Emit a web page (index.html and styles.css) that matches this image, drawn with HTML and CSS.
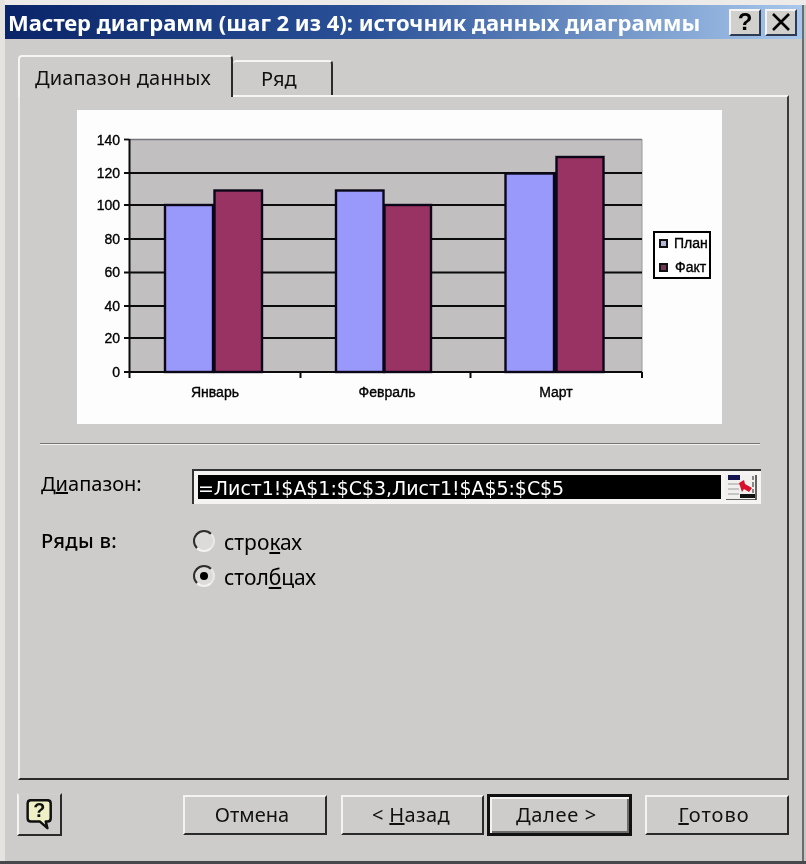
FILE: index.html
```html
<!DOCTYPE html>
<html lang="ru">
<head>
<meta charset="utf-8">
<title>Мастер диаграмм</title>
<link rel="stylesheet" href="styles.css">
</head>
<body>
<div class="window">
  <header class="titlebar">
    <span class="title">Мастер диаграмм (шаг 2 из 4): источник данных диаграммы</span>
    <div class="controls">
      <button class="ctl ctl-help">?</button>
      <button class="ctl ctl-close">
        <svg width="20" height="18" viewBox="0 0 20 18"><path d="M2 1 L18 17 M18 1 L2 17" stroke="#000" stroke-width="2.6" fill="none"/></svg>
      </button>
    </div>
  </header>

  <div class="tabs">
    <div class="tab tab-active">Диапазон данных</div>
    <div class="tab tab-second">Ряд</div>
  </div>

  <main class="panel">
    <div class="chart">
      <svg width="645" height="314" viewBox="77 110 645 314" class="chart-svg">
        <defs><clipPath id="legclip"><rect x="653" y="231" width="56" height="48"/></clipPath></defs>
        <rect x="77" y="110" width="645" height="314" fill="#fdfdfd"/>
        <rect x="129" y="139" width="513" height="233" fill="#c1bfc0"/>
        <path d="M129 139.5H642" stroke="#77767a" stroke-width="1.5"/>
        <path d="M642 139V372" stroke="#99989a" stroke-width="1"/>
        <g stroke="#0b0b0b" stroke-width="1.8" fill="none">
          <path d="M124 173H642M124 205H642M124 239H642M124 272.5H642M124 306H642M124 338H642"/>
          <path d="M124 139.5H129"/>
          <path d="M129.5 139V378M124 372H642M300.5 372V378M470.5 372V378M642 372V378" stroke-width="2"/>
        </g>
        <g stroke="#0b0718" stroke-width="2.4">
          <rect x="165" y="205" width="48" height="167" fill="#9999fb"/>
          <rect x="214.5" y="190.5" width="47.5" height="181.5" fill="#993364"/>
          <rect x="336" y="190.5" width="47.5" height="181.5" fill="#9999fb"/>
          <rect x="384.5" y="205" width="46.5" height="167" fill="#993364"/>
          <rect x="505.5" y="173.5" width="48.5" height="198.5" fill="#9999fb"/>
          <rect x="556.5" y="157" width="47" height="215" fill="#993364"/>
        </g>
        <path d="M554.5 173V372" stroke="#0b0718" stroke-width="3"/>
        <g class="axis-y" text-anchor="end">
          <text x="120" y="145">140</text>
          <text x="120" y="178">120</text>
          <text x="120" y="210">100</text>
          <text x="120" y="244">80</text>
          <text x="120" y="277">60</text>
          <text x="120" y="311">40</text>
          <text x="120" y="343">20</text>
          <text x="120" y="377">0</text>
        </g>
        <g class="axis-x" text-anchor="middle">
          <text x="215" y="397">Январь</text>
          <text x="387" y="397">Февраль</text>
          <text x="556" y="397">Март</text>
        </g>
        <rect x="654" y="232" width="56" height="46" fill="#fff" stroke="#000" stroke-width="2"/>
        <rect x="660" y="240" width="7" height="7" fill="#b5b5d8" stroke="#111" stroke-width="2"/>
        <rect x="660" y="264" width="7" height="7" fill="#6e3a55" stroke="#111" stroke-width="2"/>
        <g clip-path="url(#legclip)" class="legend-text">
          <text x="674" y="248">План</text>
          <text x="675" y="272">Факт</text>
        </g>
      </svg>
    </div>

    <hr class="sep">

    <div class="field-row">
      <label class="label">Д<u>и</u>апазон:</label>
      <div class="range">
        <div class="range-text">=Лист1!$A$1:$C$3,Лист1!$A$5:$C$5</div>
        <button class="range-btn">
          <svg width="32" height="25" viewBox="0 0 32 25">
            <rect x="0" y="0" width="32" height="25" fill="#f1f0ee"/>
            <rect x="3" y="0" width="12" height="5" fill="#15154f"/>
            <path d="M3 9H16M3 14H14M3 19H14" stroke="#9a9a9a" stroke-width="1.2"/>
            <rect x="15" y="19" width="15" height="4" fill="#111"/>
            <path d="M28 1V5M28 7V12M28 14V18" stroke="#666" stroke-width="1.5"/>
            <path d="M31 0V25H1" stroke="#333" stroke-width="1.5" fill="none"/>
            <path d="M14 8 L19 5 L20 9 L27 13 L24 17 L19 14 L17 17 Z" fill="#d8102c"/>
          </svg>
        </button>
      </div>
    </div>

    <div class="radio-block">
      <div class="label">Ряды в:</div>
      <div class="radios">
        <div class="radio-row"><span class="radio"></span><span class="radio-label">стро<u>к</u>ах</span></div>
        <div class="radio-row"><span class="radio radio-on"></span><span class="radio-label">стол<u>б</u>цах</span></div>
      </div>
    </div>
  </main>

  <footer class="footer">
    <button class="btn btn-help">
      <svg width="28" height="32" viewBox="0 0 34 38">
        <path d="M6 1H26Q30 1 30 5V23Q30 27 26 27H24L26 35L17 27H6Q2 27 2 23V5Q2 1 6 1Z" fill="#eff0c6" stroke="#101010" stroke-width="3" stroke-linejoin="round"/>
        <text x="16" y="22" class="help-mark" text-anchor="middle">?</text>
      </svg>
    </button>
    <button class="btn btn-cancel">Отмена</button>
    <button class="btn btn-back">&lt; <u>Н</u>азад</button>
    <button class="btn btn-next">Далее &gt;</button>
    <button class="btn btn-done"><u>Г</u>отово</button>
  </footer>
</div>
</body>
</html>
```
FILE: styles.css
```css
* { box-sizing: border-box; }
html, body { margin: 0; padding: 0; }
body { background: #e9e8e6; width: 806px; height: 864px; overflow: hidden; }

.window {
  width: 806px;
  height: 864px;
  background: #cecccA;
  display: flex;
  flex-direction: column;
  padding-top: 5px;
  position: relative;
  box-shadow: inset 5px 0 0 #e4e3df, inset 0 5px 0 #ecebe9, inset -1px 0 0 #c6c5c3, inset -3px 0 0 #c6c5c3;
  font-family: "DejaVu Sans", sans-serif;
  color: #111;
  filter: blur(0.6px);
}
.window::after {
  content: "";
  position: absolute;
  left: 0; right: 0; bottom: 0;
  height: 3px;
  background: #47484c;
}
.window::before {
  content: "";
  position: absolute;
  top: 5px; bottom: 0; right: 2px;
  width: 2px;
  background: #6b6c70;
}

.titlebar {
  height: 34px;
  margin-left: 5px;
  margin-right: 3px;
  background: linear-gradient(90deg, #0a2468 0%, #2a5198 45%, #a8c8ec 100%);
  display: flex;
  align-items: center;
  justify-content: space-between;
  padding-left: 3px;
}
.title {
  color: #fff;
  font-family: "Noto Sans", sans-serif;
  font-weight: 700;
  font-size: 22px;
  white-space: nowrap;
}
.controls { display: flex; gap: 4px; margin-right: 6px; }
.ctl {
  width: 32px;
  height: 27px;
  padding: 0;
  background: #d2d0cd;
  border: 2px solid;
  border-color: #f4f4f2 #2e3a52 #2e3a52 #f4f4f2;
  display: flex;
  align-items: center;
  justify-content: center;
  font-family: "Liberation Sans", sans-serif;
  font-weight: 700;
  font-size: 24px;
  color: #000;
}

.tabs {
  display: flex;
  align-items: flex-end;
  margin: 16px 0 0 18px;
  height: 40px;
  position: relative;
  z-index: 1;
}
.tab {
  display: flex;
  align-items: center;
  font-size: 20px;
  font-family: "Noto Sans", sans-serif;
  border-top: 2px solid #f6f5f3;
  border-left: 2px solid #f6f5f3;
  border-right: 2px solid #2a2a2a;
  border-radius: 4px 4px 0 0;
}
.tab-active {
  width: 215px;
  height: 42px;
  margin-bottom: -2px;
  padding-left: 15px;
  letter-spacing: 0.15px;
  background: #cecccA;
}
.tab-second {
  width: 100px;
  height: 35px;
  padding-left: 28px;
  border-left: 0;
}

.panel {
  margin-left: 18px;
  width: 771px;
  height: 685px;
  border: 2px solid;
  border-color: #f6f5f3 #3a3a3a #2a2a2a #f0efed;
  display: flex;
  flex-direction: column;
  flex: none;
}
.chart { margin: 13px 0 0 57px; width: 645px; height: 314px; }
.chart-svg { display: block; }
.axis-y text, .axis-x text, .legend-text text {
  font: 14px "Liberation Sans", sans-serif;
  fill: #000;
  stroke: #000;
  stroke-width: 0.35px;
}

.sep {
  margin: 19px 0 0 20px;
  width: 720px;
  height: 2px;
  border: 0;
  border-top: 1px solid #77777a;
  border-bottom: 1px solid #f2f1ef;
}

.label {
  font-family: "Noto Sans", sans-serif;
  font-size: 20px;
  display: block;
  width: 151px;
  margin-left: 21px;
  flex: none;
  color: #000;
}
.field-row {
  display: flex;
  align-items: center;
  margin-top: 24px;
  height: 35px;
}
.field-row .label { padding-bottom: 6px; }
.range {
  width: 569px;
  height: 35px;
  display: flex;
  align-items: stretch;
  background: #f5f4f2;
  border-top: 2px solid #333;
  border-left: 2px solid #333;
  padding: 4px 3px 5px 4px;
  gap: 4px;
  flex: none;
}
.range-text {
  width: 523px;
  background: #000;
  color: #fff;
  font-family: "DejaVu Sans", sans-serif;
  font-size: 19px;
  letter-spacing: -0.06px;
  line-height: 27px;
  white-space: nowrap;
  overflow: hidden;
}
.range-btn { border: 0; padding: 0; background: none; width: 32px; flex: none; display: block; }
.range-btn svg { display: block; }

.radio-block { display: flex; margin-top: 26px; }
.radio-block .label { width: 152px; margin-top: -3px; font-weight: 500; letter-spacing: 0.3px; }
.radios { display: flex; flex-direction: column; gap: 13px; }
.radio-row { display: flex; align-items: center; height: 22px; }
.radio {
  width: 22px;
  height: 22px;
  border-radius: 50%;
  background: #dcdbd9;
  border: 2px solid;
  border-color: #2d2d2d #e9e8e6 #f3f2f0 #2d2d2d;
  display: flex;
  align-items: center;
  justify-content: center;
  flex: none;
}
.radio-on::after {
  content: "";
  width: 8px;
  height: 8px;
  border-radius: 50%;
  background: #000;
}
.radio-label {
  font-family: "Noto Sans", sans-serif;
  font-size: 21px;
  margin-left: 9px;
  position: relative;
  top: 1px;
  color: #000;
}

.footer {
  display: flex;
  align-items: center;
  margin-top: 13px;
  padding-left: 17px;
  height: 43px;
}
.btn {
  height: 40px;
  width: 144px;
  padding: 0;
  background: #cecccA;
  border: 2px solid;
  border-color: #f4f3f1 #2a2a2a #2a2a2a #f4f3f1;
  font-family: "Noto Sans", sans-serif;
  font-size: 20px;
  color: #111;
  flex: none;
}
.btn-help {
  width: 45px;
  height: 43px;
  display: flex;
  align-items: center;
  justify-content: center;
  border-top-color: #cfcecc;
}
.help-mark { font: 700 24px "Liberation Sans", sans-serif; fill: #111; }
.btn-cancel { margin-left: 121px; padding-right: 6px; }
.btn-back { margin-left: 14px; width: 143px; padding-right: 3px; letter-spacing: 0.3px; }
.btn-next {
  margin-left: 3px;
  width: 145px;
  height: 42px;
  border: 3px solid #111;
  padding-right: 6px;
  letter-spacing: 0.7px;
  box-shadow: inset 2px 2px 0 #f4f3f1, inset -2px -2px 0 #6d6d6d;
}
.btn-done { margin-left: 13px; padding-right: 6px; letter-spacing: 1px; }
```
